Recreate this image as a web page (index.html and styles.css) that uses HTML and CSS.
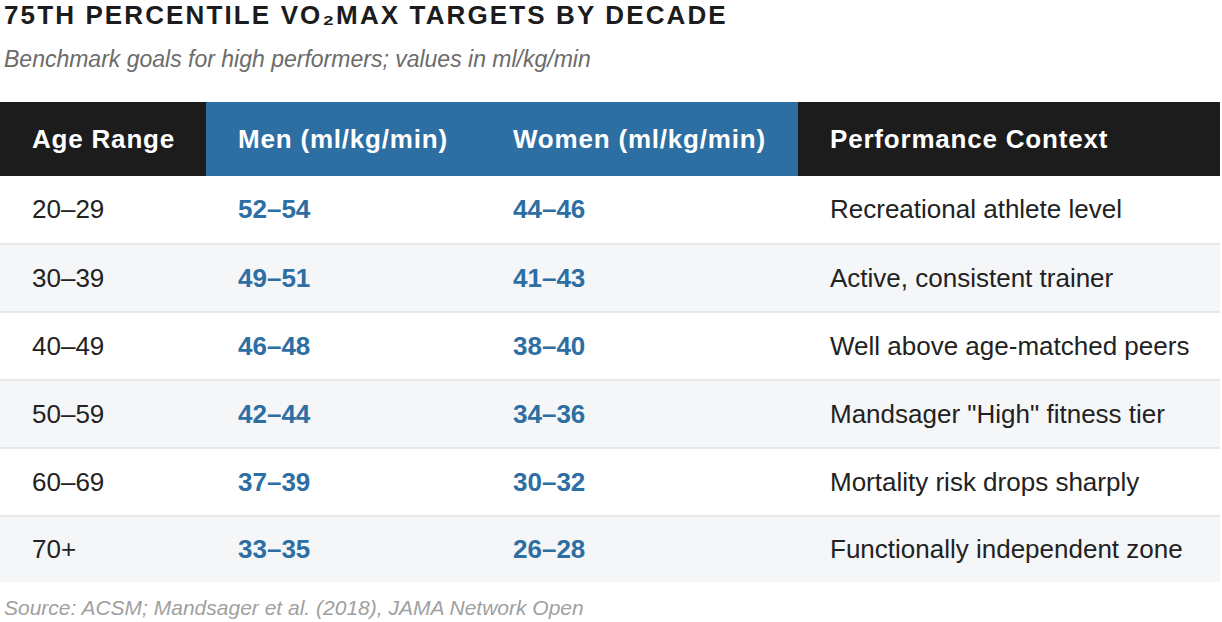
FILE: index.html
```html
<!DOCTYPE html>
<html lang="en">
<head>
<meta charset="utf-8">
<title>75th Percentile VO2max Targets by Decade</title>
<link rel="stylesheet" href="styles.css">
</head>
<body>
<div class="page">
  <h1 class="title">75th Percentile VO₂max Targets by Decade</h1>
  <p class="subtitle">Benchmark goals for high performers; values in ml/kg/min</p>
  <table class="vo-table">
    <colgroup>
      <col class="c-age">
      <col class="c-men">
      <col class="c-women">
      <col class="c-ctx">
    </colgroup>
    <thead>
      <tr>
        <th class="h-dark">Age Range</th>
        <th class="h-blue">Men (ml/kg/min)</th>
        <th class="h-blue">Women (ml/kg/min)</th>
        <th class="h-dark">Performance Context</th>
      </tr>
    </thead>
    <tbody>
      <tr><td>20–29</td><td class="val">52–54</td><td class="val">44–46</td><td>Recreational athlete level</td></tr>
      <tr><td>30–39</td><td class="val">49–51</td><td class="val">41–43</td><td>Active, consistent trainer</td></tr>
      <tr><td>40–49</td><td class="val">46–48</td><td class="val">38–40</td><td>Well above age-matched peers</td></tr>
      <tr><td>50–59</td><td class="val">42–44</td><td class="val">34–36</td><td>Mandsager "High" fitness tier</td></tr>
      <tr><td>60–69</td><td class="val">37–39</td><td class="val">30–32</td><td>Mortality risk drops sharply</td></tr>
      <tr><td>70+</td><td class="val">33–35</td><td class="val">26–28</td><td>Functionally independent zone</td></tr>
    </tbody>
  </table>
  <p class="source">Source: ACSM; Mandsager et al. (2018), JAMA Network Open</p>
</div>
</body>
</html>
```

FILE: styles.css
```css
* { box-sizing: border-box; }
html, body { margin: 0; padding: 0; background: #ffffff; }
body {
  font-family: "Liberation Sans", Arial, sans-serif;
  color: #222222;
}
.page {
  width: 1220px;
  display: flex;
  flex-direction: column;
}
.title {
  margin: 0;
  padding: 0 4px 0;
  font-size: 26px;
  line-height: 30px;
  font-weight: 700;
  letter-spacing: 2.12px;
  text-transform: uppercase;
  color: #1c1c1c;
}
.subtitle {
  margin: 0;
  padding: 15px 4px 0;
  font-size: 23px;
  line-height: 28px;
  font-style: italic;
  color: #6b6b6b;
}
.vo-table {
  margin-top: 29px;
  width: 1220px;
  border-collapse: collapse;
  table-layout: fixed;
}
.c-age { width: 206px; }
.c-men { width: 275px; }
.c-women { width: 317px; }
.c-ctx { width: 422px; }
.vo-table th {
  height: 74px;
  padding: 0 0 0 32px;
  text-align: left;
  font-size: 26px;
  font-weight: 700;
  letter-spacing: 0.8px;
  color: #ffffff;
  vertical-align: middle;
}
.h-dark { background: #1c1c1c; }
.h-blue { background: #2d6ea3; }
.vo-table td {
  height: 68px;
  padding: 0 0 0 32px;
  font-size: 26px;
  color: #222222;
  vertical-align: middle;
  border-bottom: 2px solid #e6e7eb;
}
.vo-table tbody tr:nth-child(even) td { background: #f5f6f8; }
.vo-table tbody tr:last-child td { border-bottom: none; height: 66px; }
.vo-table td.val { font-weight: 700; color: #2d6ea3; }
.source {
  margin: 0;
  padding: 13px 4px 0;
  font-size: 21px;
  line-height: 26px;
  font-style: italic;
  color: #a0a0a0;
}
```
